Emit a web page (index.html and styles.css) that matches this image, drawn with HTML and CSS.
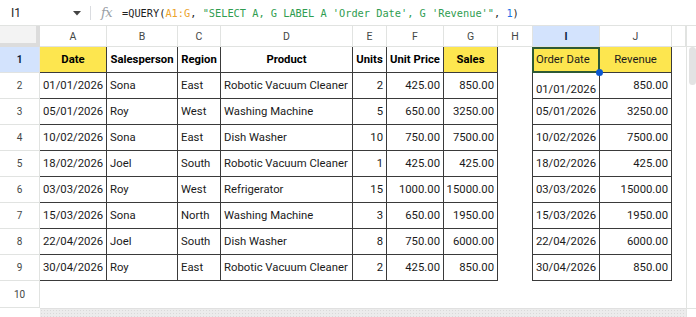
FILE: index.html
```html
<!DOCTYPE html>
<html>
<head>
<meta charset="utf-8">
<link rel="stylesheet" href="styles.css">
</head>
<body>
<div class="app">
  <div class="fbar">
    <div class="namebox">
      <span class="nbtext">I1</span>
      <svg class="caret" width="8" height="5" viewBox="0 0 8 5"><path d="M0 0 L8 0 L4 4.5 Z" fill="#444"/></svg>
    </div>
    <div class="sep"></div>
    <span class="fx">fx</span>
    <div class="formula"><span class="fk">=QUERY(</span><span class="fr">A1:G</span><span class="fk">, </span><span class="fs">"SELECT A, G LABEL A 'Order Date', G 'Revenue'"</span><span class="fk">, </span><span class="fn">1</span><span class="fk">)</span></div>
  </div>
  <div class="sheet">
    <!-- column headers -->
    <div class="corner"></div>
    <div class="ch">A</div><div class="ch">B</div><div class="ch">C</div><div class="ch">D</div><div class="ch">E</div><div class="ch">F</div><div class="ch">G</div><div class="ch">H</div><div class="ch sel">I</div><div class="ch">J</div><div class="ch"></div><div class="chs"></div>

    <!-- row 1 -->
    <div class="rh sel">1</div>
    <div class="c t ctr b y">Date</div><div class="c t ctr b">Salesperson</div><div class="c t ctr b">Region</div><div class="c t ctr b">Product</div><div class="c t ctr b">Units</div><div class="c t ctr b">Unit Price</div><div class="c t ctr b y">Sales</div>
    <div class="c"></div>
    <div class="c t y active">Order Date<span class="handle"></span></div><div class="c t ctr y">Revenue</div><div class="c"></div>
    <div class="vscroll"><div class="thumb"></div></div>

    <!-- row 2 -->
    <div class="rh">2</div>
    <div class="c t">01/01/2026</div><div class="c t">Sona</div><div class="c t">East</div><div class="c t">Robotic Vacuum Cleaner</div><div class="c t r">2</div><div class="c t r">425.00</div><div class="c t r">850.00</div>
    <div class="c hl"></div>
    <div class="c t r low">01/01/2026</div><div class="c t r">850.00</div><div class="c"></div>

    <!-- row 3 -->
    <div class="rh">3</div>
    <div class="c t">05/01/2026</div><div class="c t">Roy</div><div class="c t">West</div><div class="c t">Washing Machine</div><div class="c t r">5</div><div class="c t r">650.00</div><div class="c t r">3250.00</div>
    <div class="c hl"></div>
    <div class="c t r">05/01/2026</div><div class="c t r">3250.00</div><div class="c"></div>

    <!-- row 4 -->
    <div class="rh">4</div>
    <div class="c t">10/02/2026</div><div class="c t">Sona</div><div class="c t">East</div><div class="c t">Dish Washer</div><div class="c t r">10</div><div class="c t r">750.00</div><div class="c t r">7500.00</div>
    <div class="c hl"></div>
    <div class="c t r">10/02/2026</div><div class="c t r">7500.00</div><div class="c"></div>

    <!-- row 5 -->
    <div class="rh">5</div>
    <div class="c t">18/02/2026</div><div class="c t">Joel</div><div class="c t">South</div><div class="c t">Robotic Vacuum Cleaner</div><div class="c t r">1</div><div class="c t r">425.00</div><div class="c t r">425.00</div>
    <div class="c hl"></div>
    <div class="c t r">18/02/2026</div><div class="c t r">425.00</div><div class="c"></div>

    <!-- row 6 -->
    <div class="rh">6</div>
    <div class="c t">03/03/2026</div><div class="c t">Roy</div><div class="c t">West</div><div class="c t">Refrigerator</div><div class="c t r">15</div><div class="c t r">1000.00</div><div class="c t r">15000.00</div>
    <div class="c hl"></div>
    <div class="c t r">03/03/2026</div><div class="c t r">15000.00</div><div class="c"></div>

    <!-- row 7 -->
    <div class="rh">7</div>
    <div class="c t">15/03/2026</div><div class="c t">Sona</div><div class="c t">North</div><div class="c t">Washing Machine</div><div class="c t r">3</div><div class="c t r">650.00</div><div class="c t r">1950.00</div>
    <div class="c hl"></div>
    <div class="c t r">15/03/2026</div><div class="c t r">1950.00</div><div class="c"></div>

    <!-- row 8 -->
    <div class="rh">8</div>
    <div class="c t">22/04/2026</div><div class="c t">Joel</div><div class="c t">South</div><div class="c t">Dish Washer</div><div class="c t r">8</div><div class="c t r">750.00</div><div class="c t r">6000.00</div>
    <div class="c hl"></div>
    <div class="c t r">22/04/2026</div><div class="c t r">6000.00</div><div class="c"></div>

    <!-- row 9 -->
    <div class="rh">9</div>
    <div class="c t">30/04/2026</div><div class="c t">Roy</div><div class="c t">East</div><div class="c t">Robotic Vacuum Cleaner</div><div class="c t r">2</div><div class="c t r">425.00</div><div class="c t r">850.00</div>
    <div class="c hl"></div>
    <div class="c t r">30/04/2026</div><div class="c t r">850.00</div><div class="c"></div>

    <!-- row 10 -->
    <div class="rh">10</div>
    <div class="c span11"></div>

    <!-- horizontal scrollbar row -->
    <div class="hs-left"></div>
    <div class="hscroll"></div>
    <div class="hs-corner"></div>
  </div>
</div>
</body>
</html>
```
FILE: styles.css
```css
* { box-sizing: border-box; }
html, body { margin: 0; padding: 0; background: #fff; }
.app { width: 696px; height: 317px; overflow: hidden; font-family: Roboto, "Liberation Sans", Arial, sans-serif; color: #1f1f1f; }

.fbar { height: 26px; display: flex; align-items: center; border-bottom: 1px solid #e1e3e1; }
.namebox { width: 90px; height: 100%; display: flex; align-items: center; justify-content: space-between; padding: 0 9px 0 11px; }
.nbtext { font-size: 12px; color: #1f1f1f; }
.caret { margin-top: 1px; }
.sep { width: 1px; height: 14px; background: #dadce0; }
.fx { font-family: "DejaVu Serif", "Liberation Serif", serif; font-style: italic; font-size: 13px; color: #9aa0a6; margin-left: 10px; width: 21px; letter-spacing: -0.5px; }
.formula { font-family: "DejaVu Sans Mono", "Liberation Mono", monospace; font-size: 10.3px; white-space: pre; }
.fk { color: #1f1f1f; }
.fr { color: #eba32c; }
.fs { color: #2f9d50; }
.fn { color: #1a73e8; }

.sheet {
  display: grid;
  grid-template-columns: 40px 67px 71px 43px 132px 34px 57px 54px 35px 67px 72px 14px 10px;
  grid-template-rows: 21px repeat(9, 26px) 27px 9px;
}

.corner { background: #f3f3f3; border-right: 4px solid #dcdcdc; border-bottom: 4px solid #dcdcdc; }
.ch { display: flex; align-items: center; justify-content: center; font-size: 10.5px; color: #444746; border-right: 1px solid #e1e3e1; border-bottom: 1px solid #e1e3e1; }
.ch.sel { background: #d3e3fd; color: #0b1f3f; font-weight: bold; }
.chs { border-left: 1px solid #e1e3e1; border-bottom: 1px solid #e1e3e1; }

.rh { display: flex; align-items: center; justify-content: center; font-size: 10px; color: #444746; border-right: 1px solid #e1e3e1; border-bottom: 1px solid #e1e3e1; }
.rh.sel { background: #d3e3fd; color: #0b1f3f; font-weight: bold; }

.c { display: flex; align-items: center; padding: 0 3px; font-size: 11.3px; color: #1a1a1a; white-space: nowrap; overflow: hidden; }
.t { border-right: 1px solid #3a3a3a; border-bottom: 1px solid #3a3a3a; }
.ctr { justify-content: center; }
.r { justify-content: flex-end; }
.b { font-weight: bold; color: #000; }
.y { background: #fde64f; }
.hl { border-right: 1px solid #3a3a3a; }
.low { align-items: flex-end; padding-bottom: 2px; }
.active { position: relative; overflow: visible; }
.active::before { content: ""; position: absolute; left: -1px; top: 0; right: -1px; bottom: -1px; border: 2px solid #2d5a35; pointer-events: none; }
.handle { position: absolute; right: -4px; bottom: -4px; width: 7px; height: 7px; border-radius: 50%; background: #0b57d0; z-index: 2; }
.span11 { grid-column: 2 / span 11; }

.vscroll { grid-column: 13; grid-row: 2 / span 10; border-left: 1px solid #e1e3e1; background: #fff; padding: 0 1px 0 1px; }
.thumb { width: 7px; height: 38px; border-radius: 4px; background: #e3e3e3; margin-left: 1px; }

.hs-left { grid-column: 1; }
.hscroll { grid-column: 2 / span 11; background-color: #ececec; background-image: radial-gradient(#d9d9d9 0.6px, transparent 0.8px); background-size: 3px 3px; border-top: 1px solid #e0e0e0; }
.hs-corner { grid-column: 13; border-left: 1px solid #e1e3e1; border-top: 1px solid #e1e3e1; }
```
